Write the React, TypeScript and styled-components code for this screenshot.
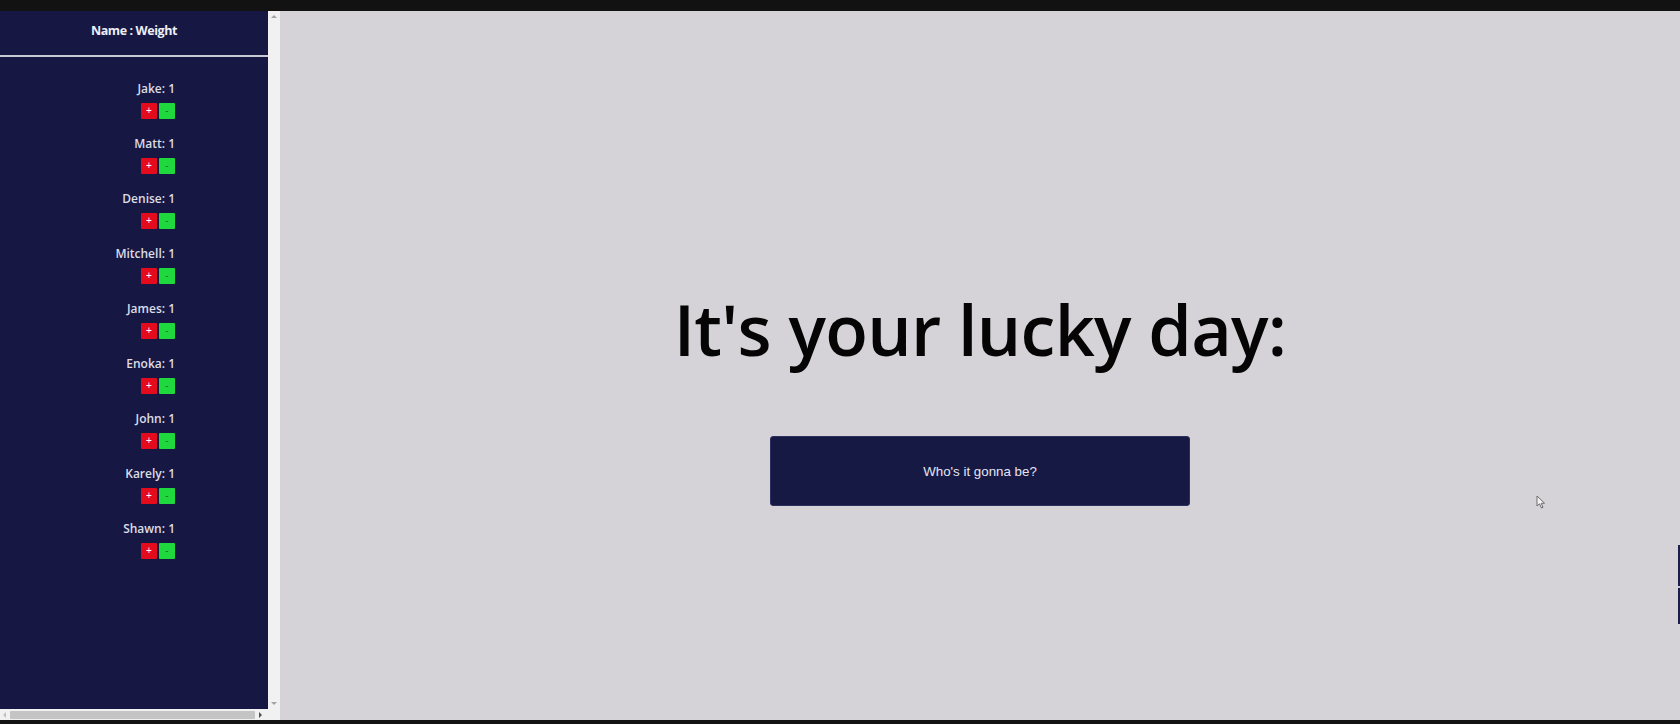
import React from "react";
import styled, { createGlobalStyle } from "styled-components";

const Global = createGlobalStyle`
  html, body { margin: 0; padding: 0; }
  body { width: 1680px; height: 724px; overflow: hidden; background: #111; font-family: "Open Sans", "Noto Sans", sans-serif; }
  #root { width: 1680px; height: 724px; }
`;

const Frame = styled.div`
  width: 1680px;
  height: 724px;
  display: flex;
  flex-direction: column;
  background: #111;
`;

const TopBar = styled.div`
  height: 11px;
  background: #121212;
  flex: none;
`;

const BottomBar = styled.div`
  height: 4px;
  background: #121212;
  flex: none;
`;

const Body = styled.div`
  flex: 1;
  display: flex;
  min-height: 0;
  position: relative;
`;

const SidePane = styled.div`
  width: 280px;
  flex: none;
  display: grid;
  grid-template-columns: 268px 12px;
  grid-template-rows: 1fr 11px;
  background: #f1f1f1;
`;

const Sidebar = styled.aside`
  background: #161843;
  display: flex;
  flex-direction: column;
  overflow: hidden;
`;

const SideHeader = styled.div`
  height: 46px;
  box-sizing: border-box;
  padding-bottom: 6px;
  border-bottom: 2px solid #c9c9d2;
  display: flex;
  align-items: center;
  justify-content: center;
  color: #eeeef4;
  font-family: "Open Sans", sans-serif;
  font-weight: 700;
  font-size: 12.5px;
  letter-spacing: -0.4px;
`;

const List = styled.ul`
  list-style: none;
  margin: 0;
  padding: 24px 93px 0 0;
  display: flex;
  flex-direction: column;
  align-items: flex-end;
`;

const Item = styled.li`
  display: flex;
  flex-direction: column;
  align-items: flex-end;
  height: 55px;
`;

const Name = styled.span`
  color: #dcdde6;
  font-family: "Open Sans", sans-serif;
  font-weight: 600;
  font-size: 12px;
  line-height: 16px;
  letter-spacing: 0px;
  margin-bottom: 6px;
`;

const Buttons = styled.div`
  display: flex;
  gap: 2px;
`;

const WeightButton = styled.button<{ $kind: "plus" | "minus" }>`
  width: 16px;
  height: 16px;
  padding: 0;
  border: none;
  border-radius: 1px;
  background: ${(p) => (p.$kind === "plus" ? "#e30b1c" : "#1fd83d")};
  color: ${(p) => (p.$kind === "plus" ? "#ffffff" : "#2a6a32")};
  font-family: "Liberation Sans", sans-serif;
  font-size: 10px;
  line-height: 16px;
  display: flex;
  align-items: center;
  justify-content: center;
`;

const VScroll = styled.div`
  background: #f1f1f1;
  display: flex;
  flex-direction: column;
  justify-content: space-between;
  align-items: center;
  padding: 4px 0;
`;

const HScroll = styled.div`
  background: #f1f1f1;
  display: flex;
  align-items: center;
  gap: 4px;
  padding: 0 3px;
`;

const Thumb = styled.div`
  flex: none;
  width: 245px;
  height: 8px;
  border-radius: 1px;
  background: #c4c4c4;
`;

const Corner = styled.div`
  background: #f1f1f1;
`;

const Arrow = styled.span<{ $dir: "up" | "down" | "left" | "right" }>`
  width: 0;
  height: 0;
  border: 3px solid transparent;
  ${(p) =>
    p.$dir === "up"
      ? "border-bottom: 3px solid #a3a3a3; border-top-width: 0;"
      : p.$dir === "down"
      ? "border-top: 3px solid #a3a3a3; border-bottom-width: 0;"
      : p.$dir === "left"
      ? "border-right: 3px solid #c2c2c2; border-left-width: 0;"
      : "border-left: 3px solid #505050; border-right-width: 0;"}
`;

const Main = styled.main`
  flex: 1;
  background: #d5d3d7;
  display: flex;
  flex-direction: column;
  align-items: center;
  padding-top: 268px;
`;

const Heading = styled.h1`
  margin: 0;
  font-family: "Open Sans", sans-serif;
  font-weight: 600;
  font-size: 70px;
  line-height: 100px;
  color: #050505;
  letter-spacing: -0.7px;
`;

const PickButton = styled.button`
  margin-top: 57px;
  width: 420px;
  height: 70px;
  border: 1px solid #2d2f5c;
  border-radius: 3px;
  background: #171945;
  color: #e4e6f2;
  font-family: "Liberation Sans", Arial, sans-serif;
  font-size: 13.333px;
`;

const EdgeStrip = styled.div`
  position: absolute;
  right: 0;
  top: 534px;
  width: 2px;
  height: 79px;
  background: linear-gradient(#1c1b4a 0 41px, #c9c8d0 41px 43px, #1c1b4a 43px);
`;

const Cursor = styled.svg`
  position: absolute;
  left: 1536px;
  top: 484px;
`;

const people = ["Jake", "Matt", "Denise", "Mitchell", "James", "Enoka", "John", "Karely", "Shawn"];

export default function App() {
  return (
    <Frame>
      <Global />
      <TopBar />
      <Body>
        <SidePane>
          <Sidebar>
            <SideHeader>Name : Weight</SideHeader>
            <List>
              {people.map((n) => (
                <Item key={n}>
                  <Name>{n}: 1</Name>
                  <Buttons>
                    <WeightButton $kind="plus">+</WeightButton>
                    <WeightButton $kind="minus">-</WeightButton>
                  </Buttons>
                </Item>
              ))}
            </List>
          </Sidebar>
          <VScroll>
            <Arrow $dir="up" />
            <Arrow $dir="down" />
          </VScroll>
          <HScroll>
            <Arrow $dir="left" />
            <Thumb />
            <Arrow $dir="right" />
          </HScroll>
          <Corner />
        </SidePane>
        <Main>
          <Heading>It's your lucky day:</Heading>
          <PickButton>Who's it gonna be?</PickButton>
        </Main>
        <EdgeStrip />
        <Cursor width="10" height="14" viewBox="0 0 10 14">
          <path d="M1 1 L1 11 L3.5 8.8 L5.5 13 L7 12.3 L5.2 8.3 L8.5 8.2 Z" fill="#f4f4f4" stroke="#6a6a6a" strokeWidth="1" />
        </Cursor>
      </Body>
      <BottomBar />
    </Frame>
  );
}
